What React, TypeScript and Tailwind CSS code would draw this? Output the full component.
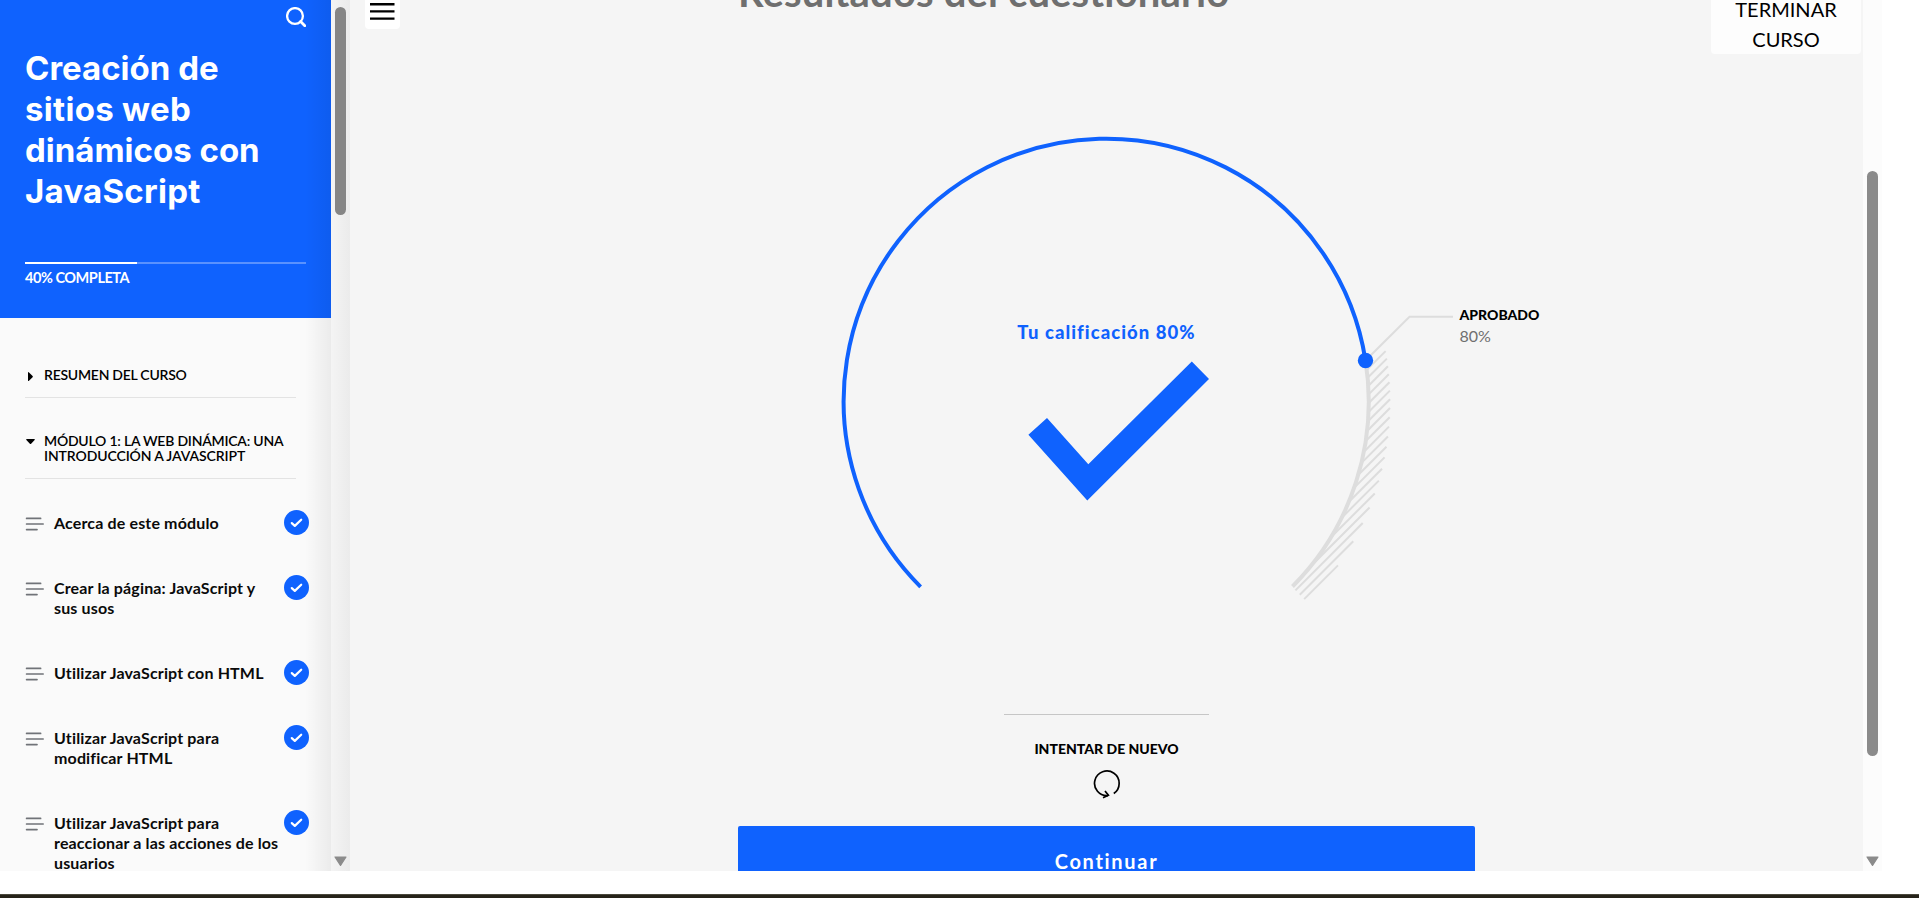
import React from "react";

type Lesson = { lines: string[] };

const lessons: Lesson[] = [
  { lines: ["Acerca de este módulo"] },
  { lines: ["Crear la página: JavaScript y", "sus usos"] },
  { lines: ["Utilizar JavaScript con HTML"] },
  { lines: ["Utilizar JavaScript para", "modificar HTML"] },
  { lines: ["Utilizar JavaScript para", "reaccionar a las acciones de los", "usuarios"] },
];

/* Gauge geometry, in the coordinates of the chart's own box. */
const CX = 368.5;
const CY = 271.5;
const INNER = 262.5;
const OUTER = 283.6;

/* Diagonal strokes between the inner and the outer circle. */
function hatchPath() {
  return Array.from({ length: 20 }, (_, i) => {
    const half = (228.7 + 8.77 * i) / 2;
    const span = (radius: number) => Math.sqrt(Math.max(0, radius * radius / 2 - half * half));
    const a = span(INNER);
    const b = span(OUTER);
    return `M${CX + half + a} ${CY + half - a}L${CX + half + b} ${CY + half - b}`;
  }).join("");
}

function LessonIcon() {
  return (
    <svg className="mt-[3px] h-4 w-[19px] shrink-0" viewBox="0 0 19 16" fill="none" stroke="#707378" strokeWidth="1.7" strokeLinecap="round">
      <path d="M1.6 2.4H15.6M1.6 8H18.2M1.6 13.6H12" />
    </svg>
  );
}

function DoneBadge() {
  return (
    <svg className="h-[25px] w-[25px] shrink-0" viewBox="0 0 25 25" fill="none">
      <circle cx="12.5" cy="12.5" r="12.5" fill="#0f62fe" />
      <path d="M7.8 13.1L10.8 15.9L17.2 9.7" stroke="#fff" strokeWidth="2.2" strokeLinecap="round" strokeLinejoin="round" />
    </svg>
  );
}

function ScrollArrow() {
  return (
    <svg className="h-[11px] w-[13px]" viewBox="0 0 13 11">
      <path d="M1 1H12L6.5 9.4Z" fill="#8b8b8b" stroke="#8b8b8b" strokeWidth="1.2" strokeLinejoin="round" />
    </svg>
  );
}

function Sidebar() {
  return (
    <aside className="relative flex h-full w-[331px] shrink-0 flex-col bg-[#fafafa]">
      <header className="flex h-[318px] shrink-0 flex-col bg-[#0f62fe] pl-[25px] pr-[25px] text-white">
        <div className="flex h-[48px] shrink-0 justify-end pt-[7px]">
          <svg className="h-5 w-5" viewBox="0 0 20 20" fill="none" stroke="#fff" strokeWidth="2.3">
            <circle cx="9" cy="9" r="7.9" />
            <path d="M14.6 14.6L18.8 18.8" strokeWidth="2.8" strokeLinecap="round" />
          </svg>
        </div>
        <h1 className="h-[214px] shrink-0 whitespace-nowrap font-[Inter,sans-serif] text-[33px] font-bold leading-[41px]">
          <span className="block">Creación de</span>
          <span className="block tracking-[0.3px]">sitios web</span>
          <span className="block">dinámicos con</span>
          <span className="block tracking-[0.25px]">JavaScript</span>
        </h1>
        <div className="h-[2px] w-full shrink-0 bg-[#5a92fe]">
          <div className="h-full w-[112px] bg-white" />
        </div>
        <p className="mt-[4px] text-[14.5px] font-bold leading-5 tracking-[-0.45px]">40% COMPLETA</p>
      </header>

      <div className="flex flex-col pl-[25px] text-[14px] leading-[15px]">
        <div className="flex h-[80px] w-[271px] border-b border-[#e3e3e3] pt-[49px]">
          <svg className="mt-[4px] h-[11px] w-[19px] shrink-0" viewBox="0 0 19 11">
            <path d="M3 1.8Q3 0.6 4 1.4L7.6 5Q8.2 5.6 7.6 6.2L4 9.8Q3 10.6 3 9.4Z" />
          </svg>
          <span className="whitespace-nowrap font-semibold tracking-[-0.25px]">RESUMEN DEL CURSO</span>
        </div>
        <div className="flex h-[81px] w-[271px] border-b border-[#e3e3e3] pt-[35px]">
          <svg className="mt-[5px] h-[8px] w-[19px] shrink-0" viewBox="0 0 19 8">
            <path d="M1.8 1H9.2Q10.4 1 9.6 2L6.1 5.8Q5.5 6.4 4.9 5.8L1.4 2Q0.6 1 1.8 1Z" />
          </svg>
          <span className="whitespace-nowrap font-semibold">
            <span className="block tracking-[-0.22px]">MÓDULO 1: LA WEB DINÁMICA: UNA</span>
            <span className="block tracking-[-0.1px]">INTRODUCCIÓN A JAVASCRIPT</span>
          </span>
        </div>
      </div>

      <ul className="flex flex-col gap-[45px] pl-[25px] pt-[34px]">
        {lessons.map((lesson, i) => (
          <li key={i} className="flex items-start">
            <LessonIcon />
            <div className="ml-[10px] w-[230px] whitespace-nowrap text-[16px] font-bold leading-5 tracking-[0.15px] text-[#0a0a0a]">
              {lesson.lines.map((line) => (
                <span key={line} className="block">{line}</span>
              ))}
            </div>
            <div className="-mb-5 -mt-[3px] h-[25px]">
              <DoneBadge />
            </div>
          </li>
        ))}
      </ul>
      <div className="absolute inset-y-0 right-0 w-[26px] bg-linear-to-r from-black/0 to-black/6" />
    </aside>
  );
}

function Gauge() {
  return (
    <div className="relative h-[584px] w-[737px]">
      <svg className="h-[584px] w-[737px] overflow-visible" viewBox="0 0 737 584" fill="none">
        <path d={hatchPath()} stroke="#dddddd" strokeWidth="2" />
        <path d="M627.5 230.5L671.5 186.7H715" stroke="#dddddd" strokeWidth="2" />
        <path d="M627.5 230.5A262.5 262.5 0 0 1 554.5 456.5" stroke="#dddddd" strokeWidth="4" />
        <path d="M182.6 456.8A262.5 262.5 0 1 1 627.5 230.5" stroke="#0f62fe" strokeWidth="4" />
        <circle cx="627.5" cy="230.5" r="7.7" fill="#0f62fe" />
        <path d="M290.4 304.7L309 288L350.3 334.3L453.8 231.5L471 249L349.3 370.5Z" fill="#0f62fe" />
      </svg>
      <p className="absolute left-0 top-[190px] w-full text-center text-[18.5px] font-black leading-6 tracking-[1.05px] text-[#0f62fe]">
        Tu calificación 80%
      </p>
      <div className="absolute left-[721.5px] top-[175px] whitespace-nowrap">
        <p className="text-[14px] font-black leading-5 text-black">APROBADO</p>
        <p className="text-[16px] leading-[22px] text-[#6f6f6f]">80%</p>
      </div>
    </div>
  );
}

export default function App() {
  return (
    <div className="flex h-[898px] w-[1919px] flex-col overflow-hidden bg-white font-[Lato,sans-serif]">
      <div className="flex h-[871px] shrink-0 overflow-hidden">
        <Sidebar />
        <div className="flex w-[19px] shrink-0 flex-col items-center justify-between bg-linear-to-r from-[#f4f4f4] to-[#ebebeb] pb-[4px] pt-[7px]">
          <div className="h-[208px] w-[11px] rounded-full bg-[#858585]" />
          <ScrollArrow />
        </div>

        <main className="flex h-full w-[1513px] shrink-0 items-start overflow-hidden bg-[#f5f5f5]">
          <div className="flex w-[388px] shrink-0 pl-[15px]">
            <button className="flex h-[29px] w-[35px] justify-center rounded-b-[4px] bg-white pt-[3px]" aria-label="Menú">
              <svg className="h-[17px] w-[25px]" viewBox="0 0 25 17" fill="none" stroke="#000" strokeWidth="2.4">
                <path d="M0 1.2H24.5M0 8.4H24.5M0 15.6H24.5" />
              </svg>
            </button>
          </div>
          <div className="flex w-[737px] shrink-0 flex-col items-center">
            <h2 className="-mt-[40px] h-[170px] w-full whitespace-nowrap text-[40px] font-bold leading-[64px] tracking-[0.15px] text-[#6f6f6f]">
              Resultados del cuestionario
            </h2>
            <Gauge />
            <div className="h-px w-[205px] bg-[#c6c6c6]" />
            <button className="mt-[24px] flex flex-col items-center text-[14px] font-black leading-5 text-black">
              INTENTAR DE NUEVO
              <svg className="mt-[10px] h-[32px] w-[28px]" viewBox="0 0 28 32" fill="none" stroke="#000" strokeWidth="1.7">
                <path d="M20.8 24.5A12.3 12.3 0 1 0 15 26.6" />
                <path d="M12 22L15.4 26.3L10 28.8" />
              </svg>
            </button>
            <button className="mt-[25px] h-[70px] w-full shrink-0 rounded-[2px] bg-[#0f62fe] text-[20px] font-bold tracking-[1.7px] text-white">
              Continuar
            </button>
          </div>
          <div className="flex grow justify-end pr-[2px]">
            <button className="-mt-[20px] w-[150px] rounded-[4px] bg-[#fdfdfd] px-5 pt-[14px] text-[20px] leading-[30px] text-black">
              TERMINAR CURSO
            </button>
          </div>
        </main>

        <div className="flex w-[19px] shrink-0 flex-col items-center justify-between bg-[#fcfcfc] pb-[4px] pt-[171px]">
          <div className="h-[585px] w-[11px] rounded-full bg-[#8b8b8b]" />
          <ScrollArrow />
        </div>
      </div>
      <div className="mt-auto h-[4px] border-t border-[#4a483c] bg-[#26231a]" />
    </div>
  );
}
